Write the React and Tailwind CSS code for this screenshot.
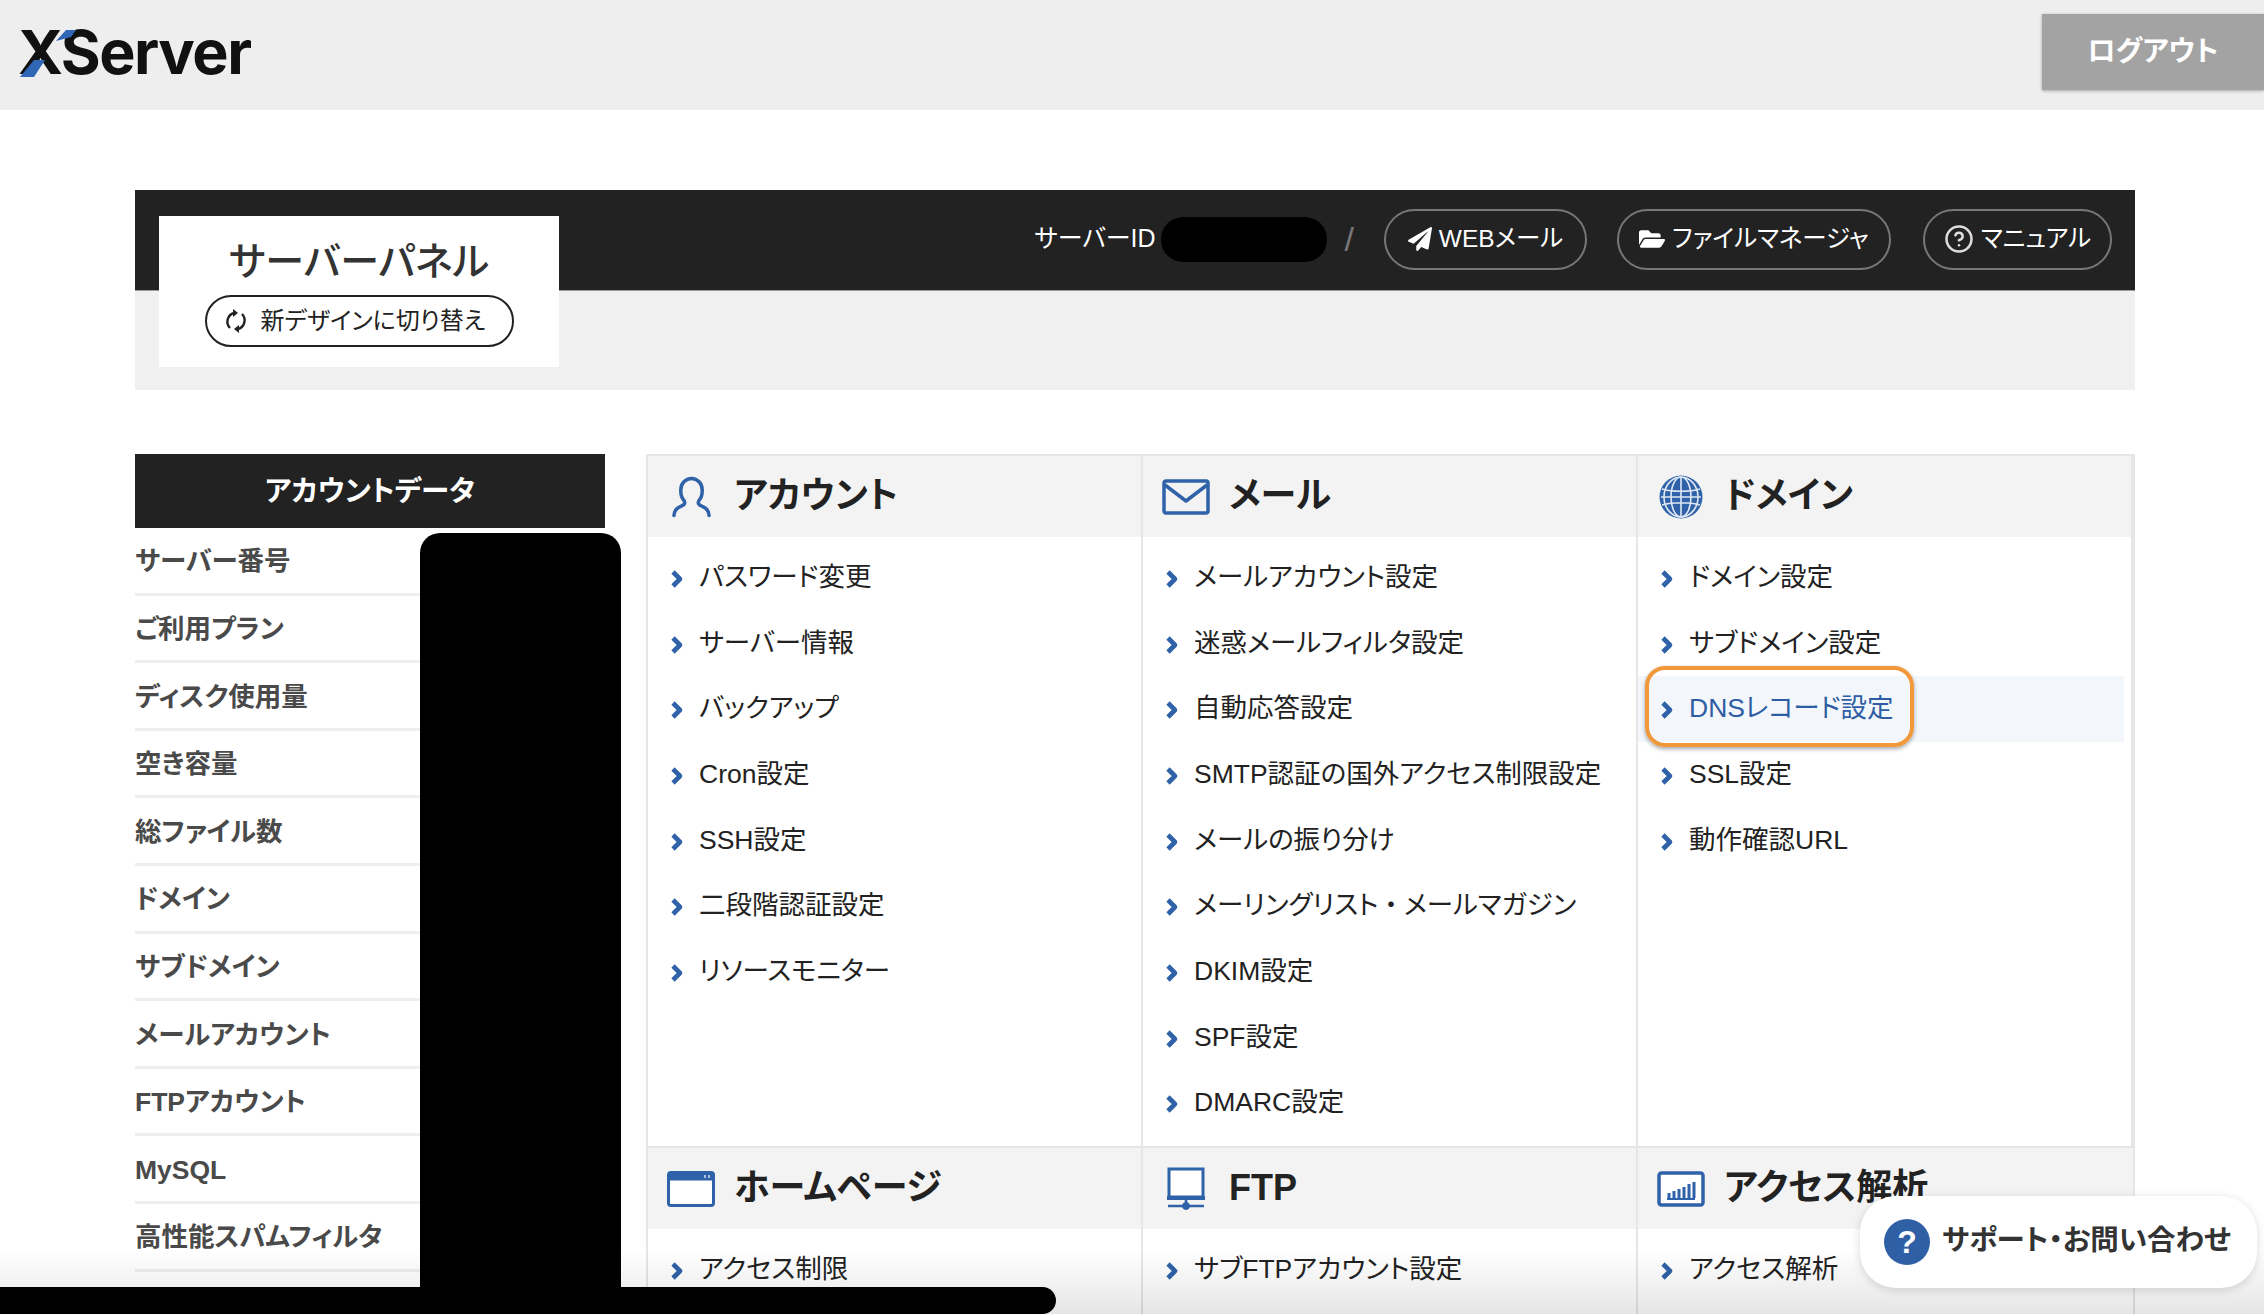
import React from "react";
import { FaPaperPlane, FaFolderOpen } from "react-icons/fa";
import { CircleHelp } from "lucide-react";

const blue = "#2f62a8";

const accountRows = [
  "サーバー番号",
  "ご利用プラン",
  "ディスク使用量",
  "空き容量",
  "総ファイル数",
  "ドメイン",
  "サブドメイン",
  "メールアカウント",
  "FTPアカウント",
  "MySQL",
  "高性能スパムフィルタ",
];

const PersonIcon = () => (
  <svg width="41" height="42" viewBox="0 0 42 42" fill="none" stroke={blue} strokeWidth="3.6" strokeLinecap="round" strokeLinejoin="round">
    <path d="M3 40c0-5 3-8 8-10 3-1 4-3 2-6-2-2-3-6-3-10C10 7 15 2 21 2s11 5 11 12c0 4-1 8-3 10-2 3-1 5 2 6 5 2 8 5 8 10" />
  </svg>
);

const MailIcon = () => (
  <svg width="48" height="36" viewBox="0 0 48 36" fill="none" stroke={blue} strokeWidth="3.5" strokeLinejoin="round">
    <rect x="2" y="2" width="44" height="32" rx="2" />
    <path d="M3 6l21 16L45 6" />
  </svg>
);

const GlobeIcon = () => (
  <svg width="44" height="44" viewBox="0 0 44 44" fill="none">
    <circle cx="22" cy="22" r="21.5" fill={blue} />
    <g stroke="#dfe8f4" strokeWidth="1.6">
      <ellipse cx="22" cy="22" rx="10" ry="20" />
      <ellipse cx="22" cy="22" rx="17" ry="20" />
      <path d="M22 2v40M3 14c10 3 28 3 38 0M3 30c10-3 28-3 38 0M2 22h40" />
    </g>
  </svg>
);

const WindowIcon = () => (
  <svg width="48" height="36" viewBox="0 0 48 36" fill="none">
    <rect x="1.5" y="1.5" width="45" height="33" rx="2.5" stroke={blue} strokeWidth="3" fill="#fff" />
    <rect x="1.5" y="1.5" width="45" height="8" fill={blue} />
    <path d="M38 4v3M42 4v3" stroke="#fff" strokeWidth="1.2" />
  </svg>
);

const MonitorIcon = () => (
  <svg width="40" height="44" viewBox="0 0 40 44" fill="none" stroke={blue}>
    <rect x="3" y="2" width="34" height="28" strokeWidth="3" fill="#fff" />
    <path d="M1 31h38" strokeWidth="4" />
    <path d="M20 32v8M2 39h36" strokeWidth="2.5" />
    <circle cx="20" cy="39" r="3.5" fill={blue} />
  </svg>
);

const ChartIcon = () => (
  <svg width="48" height="36" viewBox="0 0 48 36" fill="none">
    <rect x="2" y="2" width="44" height="32" rx="2.5" stroke={blue} strokeWidth="3.5" fill="#fff" />
    <path d="M10 28h28" stroke={blue} strokeWidth="2" />
    <path d="M12 27v-5M17 27v-7M22 27v-9M27 27v-11M32 27v-14M37 27v-16" stroke={blue} strokeWidth="3" />
  </svg>
);

const Chevron = () => (
  <svg width="14" height="20" viewBox="0 0 14 20" className="mt-[2px] shrink-0" fill="none">
    <path d="M3 3l7 7-7 7" stroke={blue} strokeWidth="4.6" strokeLinejoin="round" />
  </svg>
);

const RefreshIcon = () => (
  <svg width="24" height="26" viewBox="0 0 24 26" fill="none" stroke="#222" strokeWidth="2.4">
    <path d="M6 20A9 9 0 0 1 10 5" />
    <path d="M18 6a9 9 0 0 1-4 15" />
    <path d="M9 1l5 4-5 4z" fill="#222" strokeWidth="0" />
    <path d="M15 17l-5 4 5 4z" fill="#222" strokeWidth="0" />
  </svg>
);

const PanelLink = ({ icon, label, className }) => (
  <a className={`flex h-[61px] items-center justify-center gap-[7px] rounded-full border-2 border-[#777] text-[24.5px] text-white ${className}`}>
    {icon}
    {label}
  </a>
);

const MenuSection = ({ icon, title, items, className = "" }) => (
  <section className={`border-r-2 border-[#e6e6e6] last:border-r-0 ${className}`}>
    <div className="flex h-[81px] items-center gap-[18px] bg-[#f3f3f3] pl-[18px]">
      <div className="flex w-[50px] justify-center">{icon}</div>
      <h2 className="pb-[2px] text-[36px] font-bold text-[#222]">{title}</h2>
    </div>
    <ul className="pt-[8px]">
      {items.map((item) => (
        <li
          key={item}
          className={`flex h-[65.7px] items-center gap-[15px] pl-[22px] text-[26.5px] ${
            item === "DNSレコード設定" ? "mr-[7px] bg-[#f3f7fc] text-[#2f5da3]" : "text-[#222]"
          }`}
        >
          <Chevron />
          {item.includes("・") ? (
            <span>
              {item.split("・")[0]}
              <span className="mx-[6px]">・</span>
              {item.split("・")[1]}
            </span>
          ) : (
            item
          )}
        </li>
      ))}
    </ul>
  </section>
);

export default function App() {
  return (
    <div className="relative h-[1314px] overflow-hidden bg-white font-['Liberation_Sans','Noto_Sans_CJK_JP',sans-serif] [font-feature-settings:'palt']">
      <header className="flex h-[110px] items-start justify-between bg-[#eeeeee]">
        <div className="relative ml-[18px] mt-[16px] font-['Inter',sans-serif] text-[61px] leading-[72px] font-bold tracking-[-1.5px] text-[#111]">
          XServer
          <svg className="absolute left-0 top-[14px]" width="66" height="48" viewBox="0 0 66 48">
            <path d="M2 47L16 30l11 0L16 47zM38 11L48 0l10 0-5 7z" fill="#2f66b5" />
          </svg>
        </div>
        <button className="mt-[14px] flex h-[76px] w-[222px] items-center justify-center bg-[#a3a3a3] text-[28px] font-bold text-white shadow-[0_1px_3px_rgba(0,0,0,0.3)]">
          ログアウト
        </button>
      </header>

      <main className="ml-[135px] mt-[80px] w-[2000px]">
        <div className="flex h-[200px] justify-between bg-[linear-gradient(#222_100px,#999_100px,#999_101px,#f0f0f0_101px)]">
          <div className="ml-[24px] mt-[26px] flex h-[151px] w-[400px] flex-col items-center bg-white">
            <h1 className="mt-[22px] text-[39px] leading-[48px] font-medium text-[#333]">サーバーパネル</h1>
            <a className="mt-[9px] flex h-[52px] w-[309px] items-center justify-center gap-[13px] rounded-full border-2 border-[#222] pr-[9px] text-[24px] text-[#222]">
              <RefreshIcon />
              新デザインに切り替え
            </a>
          </div>
          <nav className="mr-[23px] flex h-[98px] items-center">
            <span className="text-[25px] text-white">サーバーID</span>
            <span className="ml-[5px] h-[45px] w-[166px] rounded-[22px] bg-black" />
            <span className="ml-[18px] text-[34px] leading-none font-light text-[#777]">/</span>
            <PanelLink className="ml-[30px] w-[203px]" icon={<FaPaperPlane size={24} />} label="WEBメール" />
            <PanelLink className="ml-[30px] w-[274px]" icon={<FaFolderOpen size={26} />} label="ファイルマネージャ" />
            <PanelLink className="ml-[32px] w-[189px]" icon={<CircleHelp size={30} color="#ddd" />} label="マニュアル" />
          </nav>
        </div>

        <div className="mt-[64px] flex gap-[41px]">
          <aside className="relative w-[470px] shrink-0">
            <h2 className="flex h-[74px] items-center justify-center bg-[#222] text-[28.5px] font-bold text-white">
              アカウントデータ
            </h2>
            <ul>
              {accountRows.map((row) => (
                <li
                  key={row}
                  className="flex h-[67.6px] items-center border-b-[3px] border-[#eeeeee] pt-[4px] text-[26.5px] font-bold text-[#4a4a4a]"
                >
                  {row}
                </li>
              ))}
            </ul>
            <div className="absolute left-[285px] top-[79px] h-[800px] w-[201px] rounded-[20px] bg-black" />
          </aside>

          <div className="grid w-[1489px] grid-cols-3 grid-rows-[690px_400px] border-x-2 border-t-2 border-[#e6e6e6]">
            <MenuSection
              icon={<PersonIcon />}
              title="アカウント"
              items={["パスワード変更", "サーバー情報", "バックアップ", "Cron設定", "SSH設定", "二段階認証設定", "リソースモニター"]}
            />
            <MenuSection
              icon={<MailIcon />}
              title="メール"
              items={[
                "メールアカウント設定",
                "迷惑メールフィルタ設定",
                "自動応答設定",
                "SMTP認証の国外アクセス制限設定",
                "メールの振り分け",
                "メーリングリスト・メールマガジン",
                "DKIM設定",
                "SPF設定",
                "DMARC設定",
              ]}
            />
            <MenuSection
              icon={<GlobeIcon />}
              title="ドメイン"
              items={["ドメイン設定", "サブドメイン設定", "DNSレコード設定", "SSL設定", "動作確認URL"]}
            />
            <MenuSection icon={<WindowIcon />} title="ホームページ" items={["アクセス制限"]} className="border-t-2" />
            <MenuSection icon={<MonitorIcon />} title="FTP" items={["サブFTPアカウント設定"]} className="border-t-2" />
            <MenuSection icon={<ChartIcon />} title="アクセス解析" items={["アクセス解析"]} className="border-t-2" />
          </div>
        </div>
      </main>

      {/* orange callout round the DNS row */}
      <div className="absolute left-[1645px] top-[666px] h-[81px] w-[269px] rounded-[20px] border-[4px] border-[#f0983a] shadow-[0_2px_4px_rgba(0,0,0,0.35)]" />

      <div className="pointer-events-none absolute inset-x-0 bottom-0 h-[65px] bg-gradient-to-b from-transparent to-black/10" />

      <div className="absolute left-[1860px] top-[1196px] flex h-[92px] w-[397px] items-center gap-[12px] rounded-[36px] bg-white pl-[24px] shadow-[0_2px_10px_rgba(0,0,0,0.15)]">
        <span className="flex h-[46px] w-[46px] items-center justify-center rounded-full bg-[#2f5fa5] text-[32px] font-bold text-white">?</span>
        <span className="mb-[4px] text-[28.5px] font-bold text-[#333]">サポート・お問い合わせ</span>
      </div>

      <div className="absolute bottom-0 left-0 h-[27px] w-[1056px] rounded-tr-[24px] rounded-br-[24px] bg-black" />
    </div>
  );
}
